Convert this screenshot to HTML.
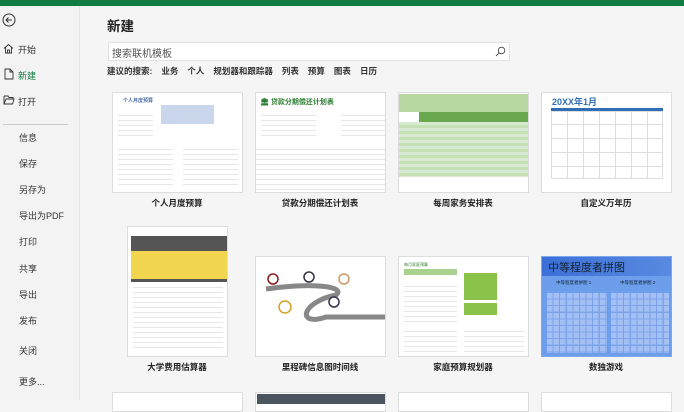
<!DOCTYPE html>
<html><head><meta charset="utf-8"><style>
*{margin:0;padding:0;box-sizing:border-box}
body{width:684px;height:400px;overflow:hidden;background:#f5f5f5;font-family:"Liberation Sans","Noto Sans CJK SC",sans-serif;color:#222;position:relative}
.top{position:absolute;left:0;top:0;width:684px;height:6px;background:#107c41}
.side{position:absolute;left:0;top:6px;width:80px;height:394px;background:#f3f3f3;border-right:1px solid #e6e6e6}
.si{position:absolute;font-size:9px;color:#333}
.sep{position:absolute;left:3px;top:118px;width:65px;height:1px;background:#ccc}
.a{position:absolute}
h1{position:absolute;left:107px;top:15px;font-size:13.5px;font-weight:bold;color:#222}
.search{position:absolute;left:108px;top:42px;width:402px;height:19px;background:#fff;border:1px solid #e2e2e2;font-size:10px;color:#555;padding:2px 3px}
.sug{position:absolute;left:107px;top:65px;font-size:8.5px;font-weight:bold;color:#333;word-spacing:0}
.sug span{margin-right:9px}
.card{position:absolute;background:#fff;border:1px solid #ddd;overflow:hidden}
.lbl{position:absolute;font-size:8.5px;font-weight:bold;color:#222;text-align:center;width:130px}
.lines{background:repeating-linear-gradient(#fff 0 4px,#e6e6e6 4px 5px)}
</style></head><body>
<div class="top"></div>
<div class="side">
<svg class="a" style="left:2px;top:7px" width="14" height="14" viewBox="0 0 14 14"><circle cx="7" cy="7" r="6" fill="none" stroke="#333" stroke-width="1"/><path d="M10 7H4M6.5 4.5L4 7l2.5 2.5" fill="none" stroke="#333" stroke-width="1"/></svg>
<svg class="a" style="left:3px;top:37px" width="11" height="11" viewBox="0 0 11 11"><path d="M1 5.5L5.5 1.5 10 5.5M2.5 4.5V10h6V4.5M4.5 10V7h2v3" fill="none" stroke="#333" stroke-width=".9"/></svg>
<div class="si" style="left:18px;top:37px">开始</div>
<svg class="a" style="left:4px;top:62px" width="10" height="12" viewBox="0 0 10 12"><path d="M1 1h5l3 3v7H1z M6 1v3h3" fill="none" stroke="#333" stroke-width=".9"/></svg>
<div class="si" style="left:18px;top:63px;color:#107c41">新建</div>
<svg class="a" style="left:3px;top:89px" width="12" height="10" viewBox="0 0 12 10"><path d="M1 1h4l1 1.5h4V4M1 1v8h8.5L11 4H3L1 9" fill="none" stroke="#333" stroke-width=".9"/></svg>
<div class="si" style="left:18px;top:89px">打开</div>
<div class="sep"></div>
<div class="si" style="left:19px;top:125px">信息</div>
<div class="si" style="left:19px;top:151px">保存</div>
<div class="si" style="left:19px;top:177px">另存为</div>
<div class="si" style="left:19px;top:203px">导出为PDF</div>
<div class="si" style="left:19px;top:229px">打印</div>
<div class="si" style="left:19px;top:256px">共享</div>
<div class="si" style="left:19px;top:282px">导出</div>
<div class="si" style="left:19px;top:308px">发布</div>
<div class="si" style="left:19px;top:338px">关闭</div>
<div class="si" style="left:19px;top:369px">更多...</div>
</div>
<h1>新建</h1>
<div class="search">搜索联机模板
<svg class="a" style="left:386px;top:3px" width="11" height="11" viewBox="0 0 11 11"><circle cx="6.5" cy="4.5" r="3.3" fill="none" stroke="#444" stroke-width=".9"/><path d="M4.2 6.8L1 10" stroke="#444" stroke-width=".9"/></svg>
</div>
<div class="sug"><span>建议的搜索:</span><span>业务</span><span>个人</span><span>规划器和跟踪器</span><span>列表</span><span>预算</span><span>图表</span><span>日历</span></div>

<!-- row 1 -->
<div class="card" style="left:112px;top:92px;width:131px;height:101px">
<div class="a" style="left:10px;top:4px;font-size:5px;color:#4a6fa5;font-weight:bold">个人月度预算</div>
<div class="a" style="left:48px;top:12px;width:53px;height:19px;background:#c9d6ec"></div>
<div class="a lines" style="left:5px;top:18px;width:35px;height:28px"></div>
<div class="a lines" style="left:5px;top:52px;width:55px;height:40px"></div>
<div class="a lines" style="left:70px;top:52px;width:55px;height:40px"></div>
</div>
<div class="lbl" style="left:112px;top:197px">个人月度预算</div>

<div class="card" style="left:255px;top:92px;width:131px;height:101px">
<div class="a" style="left:4px;top:4px;font-size:7px;color:#2e7d32;font-weight:bold">🏛 贷款分期偿还计划表</div>
<div class="a lines" style="left:5px;top:18px;width:55px;height:25px"></div>
<div class="a lines" style="left:85px;top:18px;width:45px;height:25px"></div>
<div class="a lines" style="left:0;top:52px;width:131px;height:49px"></div>
</div>
<div class="lbl" style="left:255px;top:197px">贷款分期偿还计划表</div>

<div class="card" style="left:398px;top:92px;width:131px;height:101px">
<div class="a" style="left:0;top:1px;width:131px;height:18px;background:#b6d7a0"></div>
<div class="a" style="left:20px;top:19px;width:111px;height:10px;background:#6aa84f"></div>
<div class="a" style="left:0;top:29px;width:131px;height:55px;background:repeating-linear-gradient(#d9ead3 0 3px,#c5e0b4 3px 6px)"></div>
</div>
<div class="lbl" style="left:398px;top:197px">每周家务安排表</div>

<div class="card" style="left:541px;top:92px;width:131px;height:101px">
<div class="a" style="left:10px;top:2px;font-size:9px;color:#2f6eb5;font-weight:bold">20XX年1月</div>
<div class="a" style="left:9px;top:15px;width:112px;height:3px;background:#2f6eb5"></div>
<div class="a" style="left:9px;top:18px;width:112px;height:68px;background:repeating-linear-gradient(90deg,#fff 0 15px,#ddd 15px 16px),#fff;border:1px solid #ddd"></div>
<div class="a" style="left:9px;top:18px;width:112px;height:68px;background:repeating-linear-gradient(transparent 0 13px,#ddd 13px 14px)"></div>
</div>
<div class="lbl" style="left:541px;top:197px">自定义万年历</div>

<!-- row 2 -->
<div class="card" style="left:127px;top:226px;width:101px;height:131px">
<div class="a" style="left:3px;top:9px;width:96px;height:15px;background:#555"></div>
<div class="a" style="left:3px;top:24px;width:96px;height:28px;background:#f2d54e"></div>
<div class="a" style="left:3px;top:52px;width:96px;height:3px;background:#555"></div>
<div class="a lines" style="left:5px;top:56px;width:90px;height:68px"></div>
</div>
<div class="lbl" style="left:112px;top:361px">大学费用估算器</div>

<div class="card" style="left:255px;top:256px;width:131px;height:101px">
<svg class="a" style="left:0;top:0" width="131" height="101" viewBox="0 0 131 101"><path d="M10 32 C60 25 90 30 80 38 C45 45 40 70 70 60 L131 60" fill="none" stroke="#888" stroke-width="5"/><circle cx="17" cy="22" r="5" fill="#fff" stroke="#8b1a1a" stroke-width="1.5"/><circle cx="53" cy="20" r="5" fill="#fff" stroke="#334" stroke-width="1.5"/><circle cx="29" cy="50" r="6" fill="#fff" stroke="#d4a020" stroke-width="1.5"/><circle cx="78" cy="45" r="5" fill="#fff" stroke="#335" stroke-width="1.5"/><circle cx="88" cy="22" r="5" fill="#fff" stroke="#c96" stroke-width="1.5"/></svg>
</div>
<div class="lbl" style="left:255px;top:361px">里程碑信息图时间线</div>

<div class="card" style="left:398px;top:256px;width:131px;height:101px">
<div class="a" style="left:5px;top:5px;font-size:4px;color:#2e7d32">每月家庭预算</div>
<div class="a" style="left:5px;top:12px;width:53px;height:6px;background:#a9d18e"></div>
<div class="a" style="left:65px;top:16px;width:33px;height:27px;background:#8bc34a"></div>
<div class="a" style="left:65px;top:46px;width:33px;height:12px;background:#8bc34a"></div>
<div class="a lines" style="left:5px;top:25px;width:53px;height:40px"></div>
<div class="a lines" style="left:5px;top:70px;width:53px;height:28px"></div>
<div class="a lines" style="left:65px;top:70px;width:60px;height:28px"></div>
</div>
<div class="lbl" style="left:398px;top:361px">家庭预算规划器</div>

<div class="card" style="left:541px;top:256px;width:131px;height:101px;background:#6d9eeb;border-color:#7ba7ee">
<div class="a" style="left:0;top:0;width:131px;height:19px;background:linear-gradient(90deg,#3b6fd6,#5a8ae0)"></div>
<div class="a" style="left:6px;top:2px;font-size:11px;color:#123">中等程度者拼图</div>
<div class="a" style="left:14px;top:23px;font-size:4.5px;color:#123">中等程度者拼图 1</div>
<div class="a" style="left:78px;top:23px;font-size:4.5px;color:#123">中等程度者拼图 2</div>
<div class="a" style="left:5px;top:36px;width:60px;height:60px;background:repeating-linear-gradient(90deg,#a9c4f5 0 5.5px,#7fa3e8 5.5px 6.6px),#a9c4f5;opacity:.9"></div>
<div class="a" style="left:5px;top:36px;width:60px;height:60px;background:repeating-linear-gradient(transparent 0 5.5px,#7fa3e8 5.5px 6.6px)"></div>
<div class="a" style="left:69px;top:36px;width:58px;height:60px;background:repeating-linear-gradient(90deg,#a9c4f5 0 5.5px,#7fa3e8 5.5px 6.6px),#a9c4f5;opacity:.9"></div>
<div class="a" style="left:69px;top:36px;width:58px;height:60px;background:repeating-linear-gradient(transparent 0 5.5px,#7fa3e8 5.5px 6.6px)"></div>
</div>
<div class="lbl" style="left:541px;top:361px">数独游戏</div>

<!-- row 3 partial -->
<div class="card" style="left:112px;top:392px;width:131px;height:20px"></div>
<div class="card" style="left:255px;top:392px;width:131px;height:20px"><div class="a" style="left:1px;top:1px;width:129px;height:10px;background:#4a5560"></div></div>
<div class="card" style="left:398px;top:392px;width:131px;height:20px"></div>
<div class="card" style="left:541px;top:392px;width:131px;height:20px"></div>
</body></html>
